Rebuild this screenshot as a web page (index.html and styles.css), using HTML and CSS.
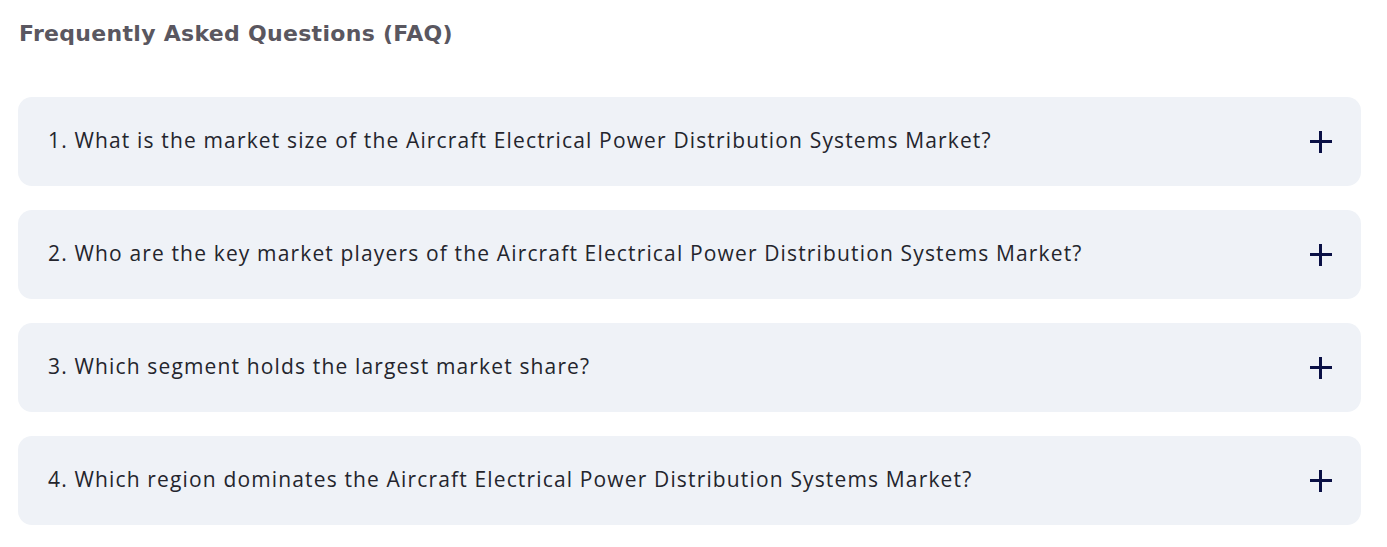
FILE: index.html
```html
<!DOCTYPE html>
<html lang="en">

<head>
  <meta charset="UTF-8">
  <title>FAQ</title>
  <link rel="stylesheet" href="styles.css">
</head>

<body>
  <div class="faq">
    <h2 class="faq-title">Frequently Asked Questions (FAQ)</h2>
    <div class="faq-list">
      <div class="faq-item">
        <span class="faq-q">1. What is the market size of the Aircraft Electrical Power Distribution Systems Market?</span>
        <span class="faq-plus"></span>
      </div>
      <div class="faq-item">
        <span class="faq-q">2. Who are the key market players of the Aircraft Electrical Power Distribution Systems Market?</span>
        <span class="faq-plus"></span>
      </div>
      <div class="faq-item">
        <span class="faq-q">3. Which segment holds the largest market share?</span>
        <span class="faq-plus"></span>
      </div>
      <div class="faq-item">
        <span class="faq-q">4. Which region dominates the Aircraft Electrical Power Distribution Systems Market?</span>
        <span class="faq-plus"></span>
      </div>
    </div>
  </div>
</body>

</html>
```

FILE: styles.css
```css
body {
  margin: 0;
  background: #fff;
}

.faq {
  padding: 18px 26px 0 18px;
}

.faq-title {
  margin: 0 0 0 1px;
  font-family: "DejaVu Sans", sans-serif;
  font-weight: 700;
  font-size: 22px;
  letter-spacing: 0.3px;
  line-height: 32px;
  color: #5a5760;
}

.faq-list {
  margin-top: 47px;
  display: flex;
  flex-direction: column;
  gap: 24px;
}

.faq-item {
  display: flex;
  align-items: center;
  justify-content: space-between;
  height: 89px;
  padding: 0 29px 0 30px;
  background-color: #eff2f7;
  border-radius: 14px;
}

.faq-q {
  margin-top: -3px;
  font-family: "Open Sans", sans-serif;
  font-size: 21px;
  letter-spacing: 1.15px;
  color: #24252d;
}

.faq-plus {
  position: relative;
  width: 22px;
  height: 22px;
}

.faq-plus::before,
.faq-plus::after {
  content: "";
  position: absolute;
  background-color: #0a1045;
}

.faq-plus::before {
  left: 0;
  top: 9px;
  width: 22px;
  height: 3px;
}

.faq-plus::after {
  left: 9px;
  top: 0;
  width: 3px;
  height: 22px;
}
```
